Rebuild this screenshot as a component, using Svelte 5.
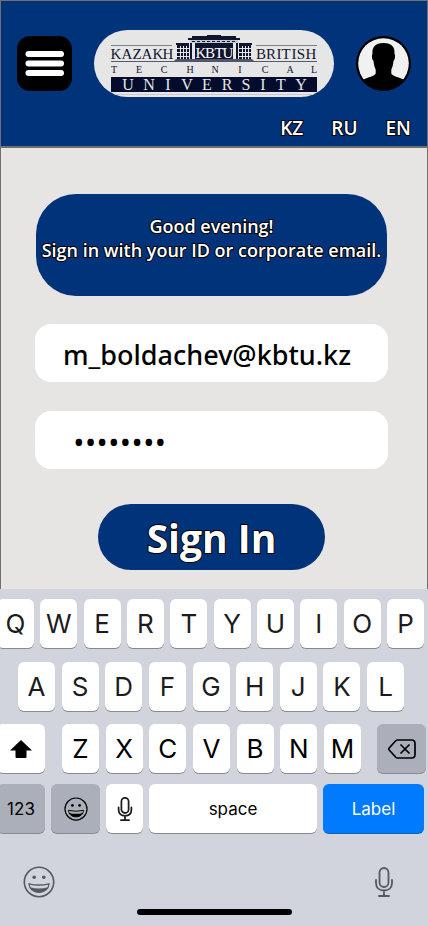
<script>
  let email = $state('m_boldachev@kbtu.kz');
  let password = $state('password');

  const rows = ['QWERTYUIOP', 'ASDFGHJKL', 'ZXCVBNM'].map((r) => r.split(''));
  const languages = ['KZ', 'RU', 'EN'];
</script>

{#snippet smiley()}
  <circle cx="16" cy="16" r="14.7" fill="none" stroke="currentColor" stroke-width="1.6" />
  <circle cx="11.2" cy="11.2" r="1.8" fill="currentColor" />
  <circle cx="20.8" cy="11.2" r="1.8" fill="currentColor" />
  <path d="M6 17.8Q16 20.2 26 17.8C25.6 23.2 21.6 26.4 16 26.4S6.4 23.2 6 17.8Z" fill="none" stroke="currentColor" stroke-width="1.3" />
  <path d="M7 21.2Q16 23.600 25 21.200C23.200 25 19.800 26.400 16 26.400S8.800 25 7 21.200Z" fill="currentColor" />
{/snippet}

{#snippet mic()}
  <rect x="5.5" y="1" width="9" height="19" rx="4.5" />
  <path d="M2 13v3c0 5 3.500 7.500 8 7.500s8-2.500 8-7.500v-3M10 23.500V29M5 29h10" />
{/snippet}

<div class="screen">
  <div class="page">
    <header>
      <div class="bar">
        <button class="menu" aria-label="Menu">
          <svg viewBox="0 0 55 55" aria-hidden="true">
            <rect x="8.5" y="15" width="38.500" height="6" rx="3" />
            <rect x="8.5" y="24.500" width="38.500" height="6" rx="3" />
            <rect x="8.5" y="34" width="38.500" height="6" rx="3" />
          </svg>
        </button>
        <a class="logo" href="#home" aria-label="Kazakh British Technical University">
          <svg viewBox="0 0 240 67">
            <defs>
              <clipPath id="pill"><rect width="240" height="67" rx="33.500" /></clipPath>
            </defs>
            <g clip-path="url(#pill)">
              <path d="M17 15.500h61M162 15.500h61" stroke="#7c7f8c" />
              <path d="M17 31.500h206" stroke="#55596d" />
              <g class="building">
                <path d="M82 13h13v2H82zM145 13h13v2h-13zM94 8h4V6h15V5h14v1h15v2h4v2H94zM96 11h48v1H96z" />
                <path d="M96 10h48v3H96z" fill="#c5c7cf" />
                <path d="M98 11.500h44" stroke="#10152f" stroke-dasharray="3 2" fill="none" />
                <path d="M101 13h38v18h-38z" />
                <path d="M96 13h2v16h-2zM142 13h2v16h-2z" />
                <path d="M83 15h12v14H83zM145 15h12v14h-12z" />
                <path d="M86.500 16v13M89.500 16v13M92.500 16v13M83 18.500h12M83 22.500h12M83 26.500h12M148.500 16v13M151.500 16v13M154.500 16v13M145 18.500h12M145 22.500h12M145 26.500h12" stroke="#e6e6e6" fill="none" />
                <path d="M82 29h76l3 3H79z" fill="#50556c" />
              </g>
              <path d="M17 47h206v15H17z" fill="#030c2c" />
              <path d="M17 64.500h206" stroke="#c9cbd0" />
              <text class="name" y="29" x="22 33 43 53 64 74">KAZAKH</text>
              <text class="abbr" y="28" x="107 116 125 134">KBTU</text>
              <text class="name" y="29" x="167 177 185 192 200 207 217">BRITISH</text>
              <text class="mid" y="43" x="20 45 70 96 121 146 171 196 220">TECHNICAL</text>
              <text class="base" y="60" x="34 55 74 93 113 133 152 169 187 207">UNIVERSITY</text>
            </g>
          </svg>
        </a>
        <button class="avatar" aria-label="Profile">
          <svg viewBox="0 0 55 55" aria-hidden="true">
            <circle cx="27.500" cy="27.500" r="27.500" fill="#000" />
            <circle cx="27.500" cy="27.500" r="25.300" fill="#f1f1f1" />
            <path d="M27.500 7C19 7 16 11 16.500 18c-1 1-.6 5.500 1 7 .4 4 1.200 6.500 2.200 8.500v4C18.500 40.500 12 41 7.500 43.500 12 50 19 53.500 27.500 53.500S43 50 47.500 43.500C43 41 36.500 40.500 35.300 37.500v-4c1-2 1.800-4.500 2.200-8.500 1.600-1.500 2-6 1-7C39 11 36 7 27.500 7Z" />
          </svg>
        </button>
      </div>
      <nav aria-label="Language">
        {#each languages as lang}
          <a href="#{lang}">{lang}</a>
        {/each}
      </nav>
    </header>

    <main>
      <p class="greeting">Good evening!<br />Sign in with your ID or corporate email.</p>
      <form onsubmit={(e) => e.preventDefault()}>
        <input class="email" type="text" aria-label="ID or corporate email" bind:value={email} />
        <input class="password" type="password" aria-label="Password" bind:value={password} />
        <button class="submit">Sign In</button>
      </form>
    </main>
  </div>

  <section class="keyboard" aria-label="Keyboard">
    <div class="row first">
      {#each rows[0] as key}<button class="key">{key}</button>{/each}
    </div>
    <div class="row second">
      {#each rows[1] as key}<button class="key">{key}</button>{/each}
    </div>
    <div class="row third">
      <button class="key shift" aria-label="Shift">
        <svg width="22" height="18" viewBox="0 0 22 18" aria-hidden="true"><path d="M11 0 22 10.500H16.500V17q0 1-1 1h-9q-1 0-1-1V10.500H0Z" /></svg>
      </button>
      <div class="letters">
        {#each rows[2] as key}<button class="key dark">{key}</button>{/each}
      </div>
      <button class="key gray erase" aria-label="Delete">
        <svg width="28" height="20" viewBox="0 0 28 20" fill="none" stroke="#000" stroke-width="1.700" aria-hidden="true">
          <path d="M9.500 1H23.500Q27 1 27 4.500V15.500Q27 19 23.500 19H9.500Q8.500 19 7.800 18.200L1.200 11Q.4 10 1.200 9L7.800 1.800Q8.500 1 9.500 1ZM12.500 5.500l9 9M21.500 5.500l-9 9" />
        </svg>
      </button>
    </div>
    <div class="row fourth">
      <button class="key gray numbers">123</button>
      <button class="key gray emoji" aria-label="Emoji"><svg width="24" height="24" viewBox="0 0 32 32" aria-hidden="true">{@render smiley()}</svg></button>
      <button class="key" aria-label="Dictate">
        <svg class="line" width="16" height="24" viewBox="0 0 20 30" stroke-width="2.200" aria-hidden="true">{@render mic()}</svg>
      </button>
      <button class="key space">space</button>
      <button class="key label">Label</button>
    </div>
    <div class="tools">
      <button aria-label="Emoji keyboard"><svg width="32" height="32" viewBox="0 0 32 32" aria-hidden="true">{@render smiley()}</svg></button>
      <button aria-label="Voice input">
        <svg class="line" width="20" height="30" viewBox="0 0 20 30" stroke-width="1.800" aria-hidden="true">{@render mic()}</svg>
      </button>
    </div>
    <div class="home"></div>
  </section>
</div>

<style>
  :global(body) {
    background: #d1d4dc;
  }
  .screen {
    display: flex;
    flex-direction: column;
    min-height: 100vh;
    overflow: hidden;
    font-family: 'Open Sans', 'Noto Sans', sans-serif;
  }
  .screen :global(*) {
    box-sizing: border-box;
  }
  button {
    border: 0;
    padding: 0;
    margin: 0;
    background: none;
    font: inherit;
    color: inherit;
  }
  svg {
    display: block;
  }
  .page {
    background: #e6e5e3;
    border: 1px solid #707070;
    border-bottom: 0;
    padding-bottom: 19px;
  }
  header {
    background: #003379;
    border-bottom: 2px solid #707070;
    padding: 29px 16px 6px;
  }
  .bar {
    display: flex;
    align-items: center;
    justify-content: space-between;
  }
  .menu,
  .avatar {
    width: 55px;
    height: 55px;
  }
  .menu {
    background: #000;
    border-radius: 13px;
    fill: #fff;
  }
  .logo {
    width: 240px;
    height: 67px;
    border-radius: 34px;
    background: #e6e6e6;
  }
  .logo text {
    font-family: 'Liberation Serif', serif;
    text-anchor: middle;
    fill: #10152f;
  }
  .building {
    fill: #10152f;
  }
  .logo .name {
    font-size: 15px;
  }
  .logo .abbr {
    font-size: 15px;
    fill: #fff;
  }
  .logo .mid {
    font-size: 10px;
  }
  .logo .base {
    font-size: 16px;
    fill: #e6e6e6;
  }
  nav {
    display: flex;
    justify-content: flex-end;
    gap: 28px;
    padding-top: 19px;
  }
  nav a {
    font-size: 19px;
    line-height: 24px;
    font-weight: 600;
    text-decoration: none;
  }
  nav a,
  .greeting,
  .submit {
    color: #fff;
    -webkit-text-stroke: 2px #000;
    paint-order: stroke fill;
  }
  main {
    padding: 46px 39px 0 34px;
  }
  .greeting {
    margin: 0 1px;
    height: 102px;
    padding-top: 20px;
    border-radius: 40px;
    background: #003379;
    text-align: center;
    font-size: 18px;
    line-height: 24px;
    font-weight: 600;
    white-space: nowrap;
  }
  form {
    display: flex;
    flex-direction: column;
  }
  input {
    width: 100%;
    height: 58px;
    border: 0;
    border-radius: 16px;
    outline: 0;
    background: #fff;
    color: #000;
    font-family: inherit;
    font-weight: 500;
  }
  .email {
    margin-top: 28px;
    padding: 2px 28px 0;
    font-family: 'Noto Sans', 'Open Sans', sans-serif;
    font-size: 27px;
  }
  .password {
    margin-top: 29px;
    padding: 4px 38px 0;
    font-size: 31px;
  }
  .submit {
    width: 227px;
    height: 66px;
    margin-top: 35px;
    align-self: center;
    border-radius: 33px;
    background: #003379;
    font-size: 39px;
    line-height: 68px;
    font-weight: 700;
  }
  .keyboard {
    flex: 1;
    background: #d1d4dc;
    padding-top: 10px;
    font-family: Inter, sans-serif;
  }
  .row {
    display: flex;
    justify-content: space-between;
    margin: 0 4px 14px -3px;
  }
  .row.second {
    margin: 0 24px 13px 18px;
  }
  .row.third {
    margin: 0 2px 11px -3px;
  }
  .row.fourth {
    gap: 6px;
    margin-bottom: 0;
  }
  .letters {
    display: flex;
    flex: 1;
    justify-content: space-between;
    margin: 0 16px 0 17px;
  }
  .key {
    display: flex;
    align-items: center;
    justify-content: center;
    width: 37px;
    height: 49px;
    border-radius: 6px;
    background: #fff;
    box-shadow: 0 1px 0 #898a8d;
    color: #1c1c1e;
    font-size: 26px;
    line-height: 32px;
  }
  .dark,
  .space {
    color: #000;
  }
  .gray {
    background: #abafba;
    color: #000;
  }
  .shift,
  .numbers {
    width: 48px;
  }
  .numbers,
  .space,
  .label {
    font-size: 17px;
  }
  .erase,
  .emoji {
    width: 49px;
  }
  .space {
    flex: 1;
  }
  .label {
    width: 101px;
    background: #007aff;
    box-shadow: 0 1px 0 #1460b4;
    color: #fff;
  }
  .line {
    fill: none;
    stroke: currentColor;
    stroke-linecap: round;
  }
  .tools {
    display: flex;
    align-items: center;
    justify-content: space-between;
    margin: 33px 34px 0 23px;
    color: #555962;
  }
  .tools button {
    color: #555962;
  }
  .home {
    width: 155px;
    height: 6px;
    margin: 11px auto 0;
    border-radius: 3px;
    background: #000;
  }
</style>
